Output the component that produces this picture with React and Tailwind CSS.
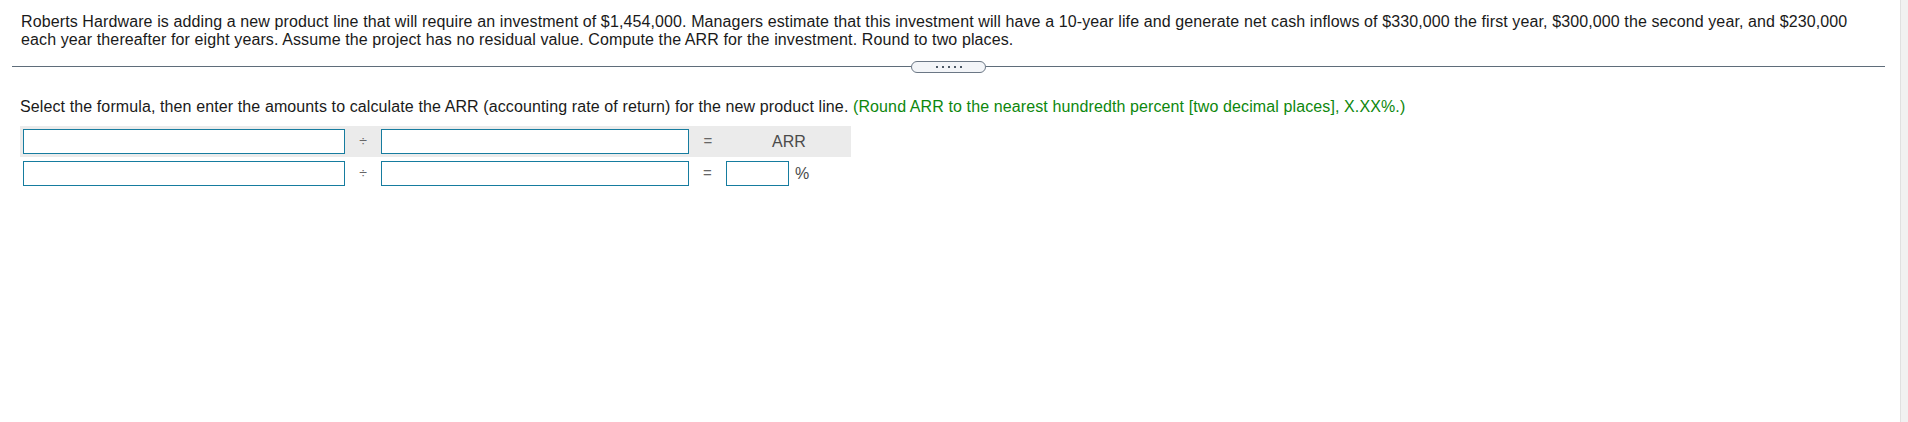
export default function App() {
  const font = { fontFamily: '"Liberation Sans", Arial, sans-serif' };

  return (
    <div className="flex w-full h-[422px] bg-white tracking-[0.11px]" style={font}>
      {/* Main content */}
      <div className="flex-1 pt-[13px] pl-[12px] pr-[15px]">
        <p className="pl-[9px] pr-[12px] text-[16px] leading-[18.4px] text-[#1a1a1a]">
          Roberts Hardware is adding a new product line that will require an investment of $1,454,000. Managers estimate that this investment will have a 10-year life and generate net cash inflows of $330,000 the first year, $300,000 the second year, and $230,000 each year thereafter for eight years. Assume the project has no residual value. Compute the ARR for the investment. Round to two places.
        </p>

        {/* Divider with handle */}
        <div className="flex items-center mt-[11px] h-[12px]">
          <div className="flex-1 h-px bg-[#5f6d7a]"></div>
          <div className="w-[75px] h-[12px] rounded-full border border-[#6b7785] bg-[#f3f5f8] flex items-center justify-center gap-[4px]">
            <span className="w-[2px] h-[2px] bg-[#4d5966]"></span>
            <span className="w-[2px] h-[2px] bg-[#4d5966]"></span>
            <span className="w-[2px] h-[2px] bg-[#4d5966]"></span>
            <span className="w-[2px] h-[2px] bg-[#4d5966]"></span>
            <span className="w-[2px] h-[2px] bg-[#4d5966]"></span>
          </div>
          <div className="flex-1 h-px bg-[#5f6d7a]"></div>
        </div>

        <div className="pl-[8px] mt-[25px]">
          <p className="text-[16px] leading-[18.4px] text-[#1a1a1a]">
            Select the formula, then enter the amounts to calculate the ARR (accounting rate of return) for the new product line.{" "}
            <span className="text-[#0d870d]">
              (Round ARR to the nearest hundredth percent [two decimal places], X.XX%.)
            </span>
          </p>

          {/* Formula rows */}
          <div className="mt-[10px] w-[831px] tracking-normal">
            <div className="flex items-center h-[31px] pl-[3px] bg-[#ebebeb]">
              <input className="w-[322px] h-[25px] border border-[#167c9f] bg-white outline-none" />
              <div className="w-[36px] text-center text-[14px] text-[#666]">÷</div>
              <input className="w-[308px] h-[25px] border border-[#167c9f] bg-white outline-none" />
              <div className="w-[38px] text-center text-[15px] text-[#666]">=</div>
              <div className="w-[124px] text-center text-[16px] text-[#4a4a4a]">ARR</div>
            </div>
            <div className="flex items-center h-[31px] pl-[3px] mt-px">
              <input className="w-[322px] h-[25px] border border-[#167c9f] bg-white outline-none" />
              <div className="w-[36px] text-center text-[14px] text-[#666]">÷</div>
              <input className="w-[308px] h-[25px] border border-[#167c9f] bg-white outline-none" />
              <div className="w-[37px] text-center text-[15px] text-[#666]">=</div>
              <div className="flex items-center">
                <input className="w-[63px] h-[25px] border border-[#167c9f] bg-white outline-none" />
                <span className="ml-[6px] text-[16px] text-[#4a4a4a]">%</span>
              </div>
            </div>
          </div>
        </div>
      </div>

      {/* Right edge strip */}
      <div className="w-[8px] h-full bg-[#f1f1f1] border-l border-[#e0e0e0]"></div>
    </div>
  );
}
